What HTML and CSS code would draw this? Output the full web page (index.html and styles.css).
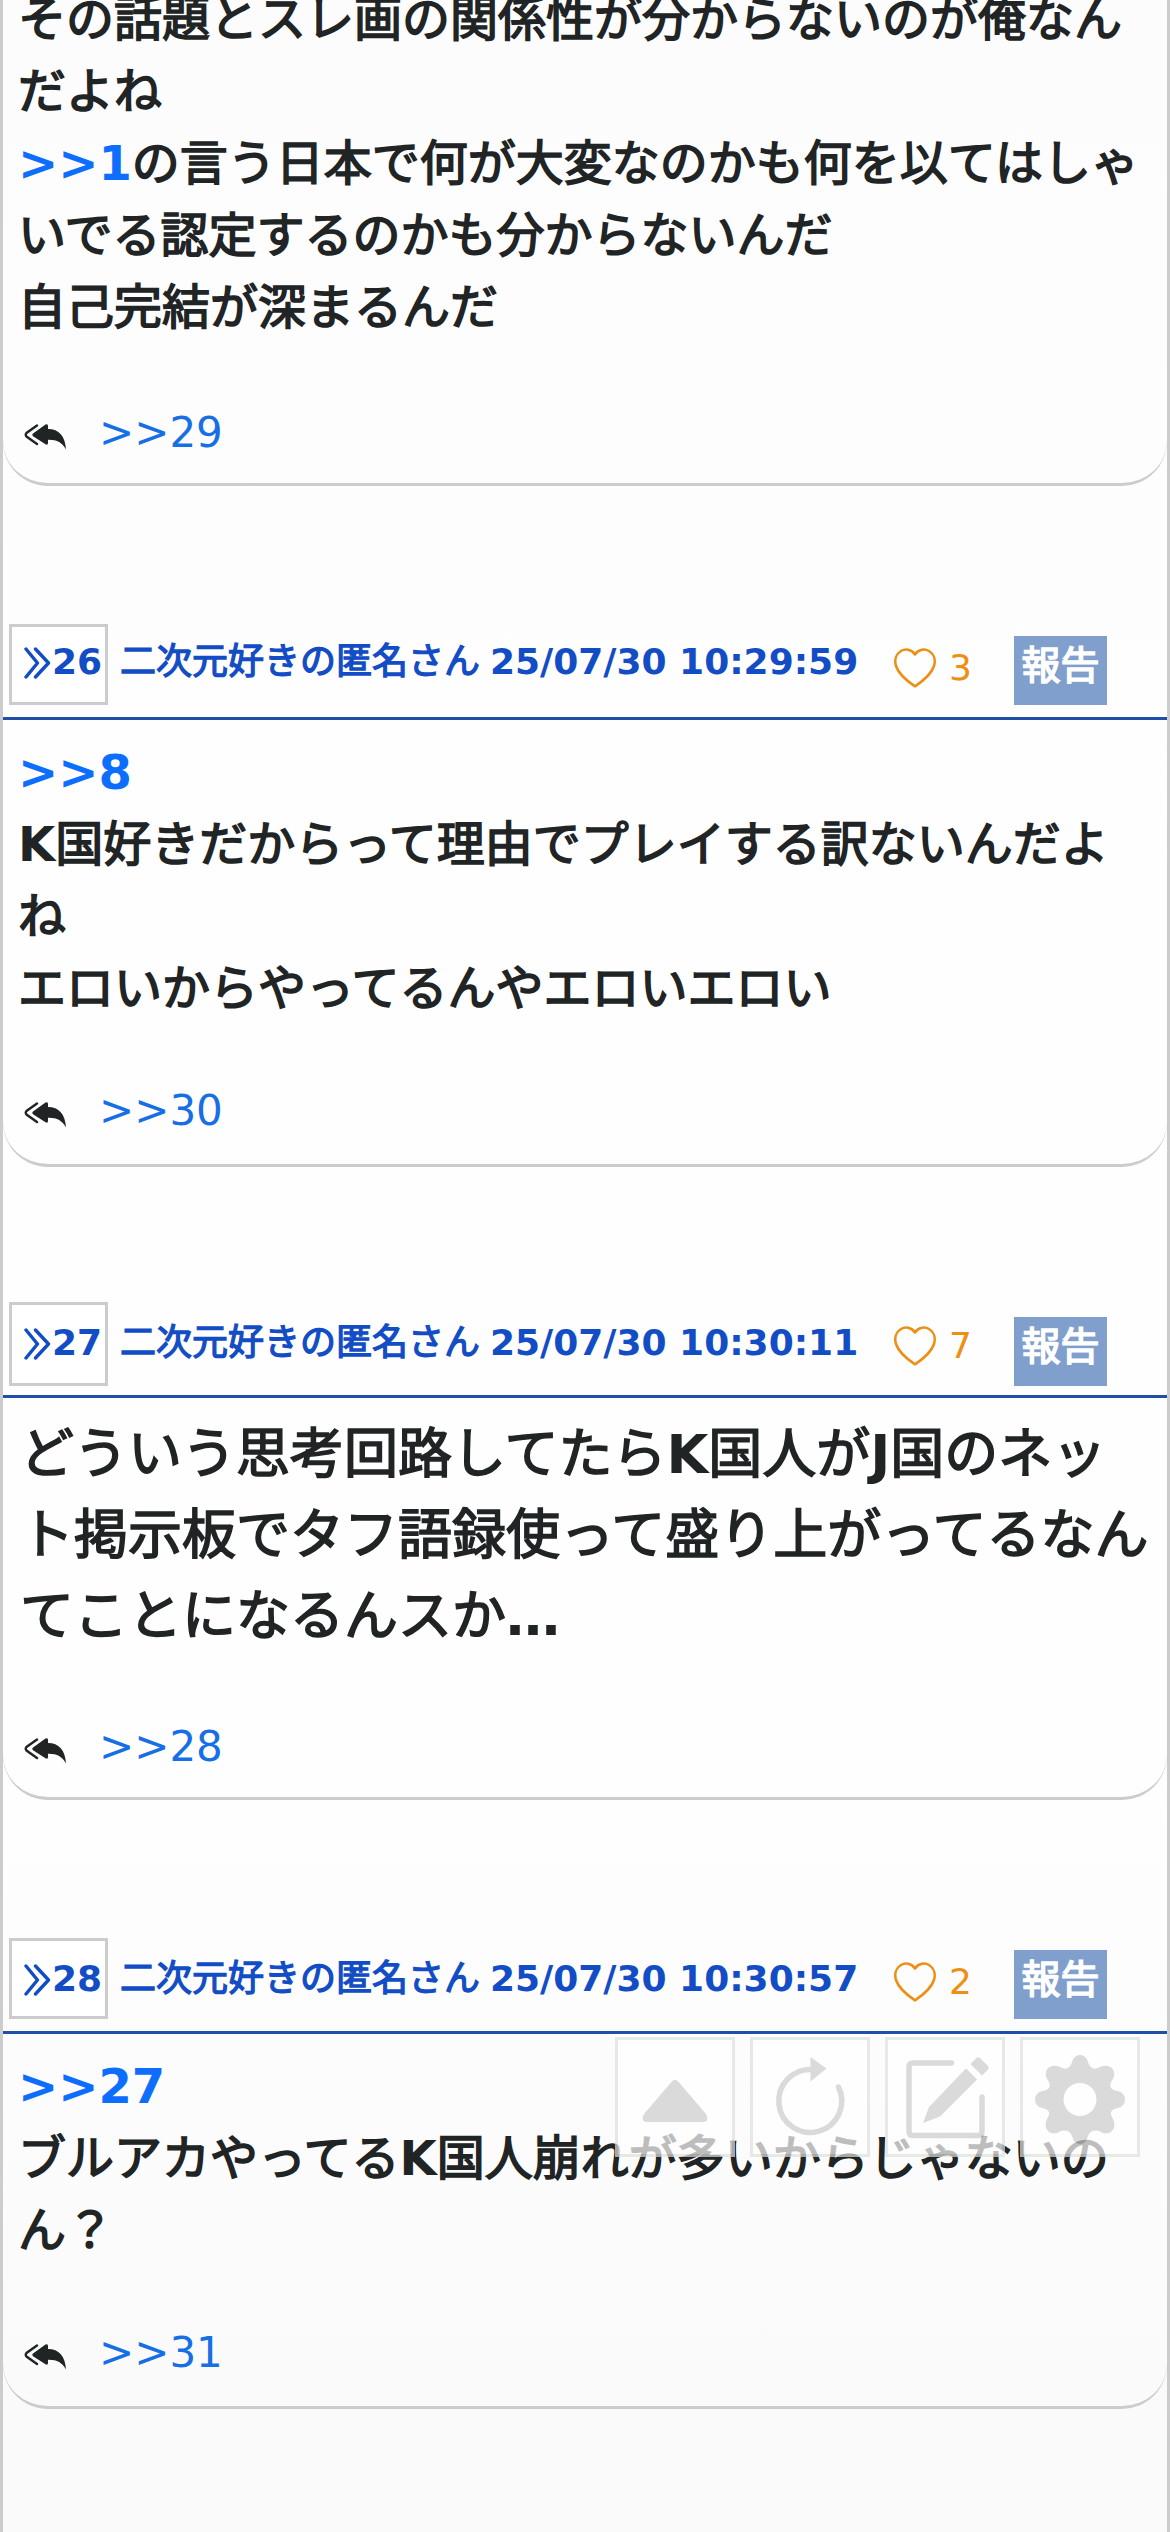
FILE: index.html
```html
<!DOCTYPE html>
<html lang="ja">
<head>
<meta charset="utf-8">
<title>スレッド</title>
<link rel="stylesheet" href="styles.css">
</head>
<body>
<svg class="defs" width="0" height="0">
  <symbol id="chev" viewBox="0 0 27 32"><path d="M2 2 L13.500 16 L2 30 M11.500 2 L24.500 16 L11.500 30" fill="none" stroke="currentColor" stroke-width="3.400" stroke-linecap="round" stroke-linejoin="round"/></symbol>
  <symbol id="heart" viewBox="0 0 42 40"><path d="M21 6.500 C17.500 1 11 .5 7 3 C2 6 .2 12 2 18 C5 27 13 33 21 38.300 C29 33 37 27 40 18 C41.800 12 40 6 35 3 C31 .5 24.500 1 21 6.500 Z" fill="none" stroke="currentColor" stroke-width="2.600" stroke-linejoin="round"/></symbol>
  <symbol id="reply" viewBox="0 0 42 26"><path d="M13 1.500 L2.500 9 Q1 10.800 2.500 12.600 L13 20" fill="none" stroke="currentColor" stroke-width="2.400" stroke-linecap="round"/><path d="M21.500 .6 Q24 -.8 24 2 V5 C35 5 41 12 42 25.500 C38 18.500 33 15.600 24 15.800 V19 Q24 21.700 21.500 20.300 L9 12.200 Q7.600 10.800 9 9.400 Z" fill="currentColor"/></symbol>
</svg>
<main class="thread">
  <article class="post first">
    <div class="text">その話題とスレ画の関係性が分からないのが俺なん<br>だよね<br><a>&gt;&gt;1</a>の言う日本で何が大変なのかも何を以てはしゃ<br>いでる認定するのかも分からないんだ<br>自己完結が深まるんだ</div>
    <div class="reply loose"><svg><use href="#reply"/></svg><a>&gt;&gt;29</a></div>
  </article>

  <article class="post p26">
    <header>
      <div class="num"><svg><use href="#chev"/></svg>26</div>
      <div class="name">二次元好きの匿名さん</div>
      <div class="date">25/07/30 10:29:59</div>
      <div class="like"><svg><use href="#heart"/></svg><span>3</span></div>
      <div class="report">報告</div>
    </header>
    <div class="text"><a>&gt;&gt;8</a><br><b>K</b>国好きだからって理由でプレイする訳ないんだよ<br>ね<br>エロいからやってるんやエロいエロい</div>
    <div class="reply"><svg><use href="#reply"/></svg><a>&gt;&gt;30</a></div>
  </article>

  <article class="post p27">
    <header>
      <div class="num"><svg><use href="#chev"/></svg>27</div>
      <div class="name">二次元好きの匿名さん</div>
      <div class="date">25/07/30 10:30:11</div>
      <div class="like"><svg><use href="#heart"/></svg><span>7</span></div>
      <div class="report">報告</div>
    </header>
    <div class="text big">どういう思考回路してたら<b>K</b>国人が<b>J</b>国のネッ<br>ト掲示板でタフ語録使って盛り上がってるなん<br>てことになるんスか<b>…</b></div>
    <div class="reply loose"><svg><use href="#reply"/></svg><a>&gt;&gt;28</a></div>
  </article>

  <article class="post p28">
    <header>
      <div class="num"><svg><use href="#chev"/></svg>28</div>
      <div class="name">二次元好きの匿名さん</div>
      <div class="date">25/07/30 10:30:57</div>
      <div class="like"><svg><use href="#heart"/></svg><span>2</span></div>
      <div class="report">報告</div>
    </header>
    <div class="text"><a>&gt;&gt;27</a><br>ブルアカやってる<b>K</b>国人崩れが多いからじゃないの<br>ん？</div>
    <div class="reply"><svg><use href="#reply"/></svg><a>&gt;&gt;31</a></div>
  </article>
</main>

<nav class="tools">
  <div class="tool"><svg viewBox="0 0 120 120"><path d="M56 45.500 Q60 40 64 45.500 L91 77 Q95 85 87 85 H33 Q25 85 29 77 Z"/></svg></div>
  <div class="tool"><svg viewBox="0 0 120 120"><path class="line" d="M62 32.500 A31.500 31.500 0 1 0 88.500 50" stroke-width="5.500"/><path d="M60.500 20 L76.500 31.500 L60.500 44.500 Z"/></svg></div>
  <div class="tool"><svg viewBox="0 0 120 120"><path class="line" d="M66.500 26 H28 Q24 26 24 30 V94.500 Q24 98.500 28 98.500 H93 Q97 98.500 97 94.500 V60" stroke-width="5.500"/><path d="M81 31.500 L92 42.500 L55 79.500 L38 86 L44 70 Z"/><path d="M91.500 21 Q93 19.500 95 21 L103 29 Q104.500 31 103 32.500 L97 38.500 L85.500 27 Z"/></svg></div>
  <div class="tool"><svg viewBox="0 0 120 120"><path d="M52 25 Q54 18 60 18 T68 25 Q71 35 80 30 Q87 27 92 31 Q97 37 91 45 Q88 53 98 54 Q105 56 105 62.500 T98 71 Q88 73 92 80 Q97 89 92 94 Q87 99 79 94 Q71 92 68 99 Q66 107 60 107 T52 99 Q49 92 41 94 Q33 99 28 94 Q23 89 28 80 Q32 73 22 71 Q15 69 15 62.500 T22 54 Q32 53 29 45 Q23 37 28 31 Q33 27 40 30 Q49 35 52 25 Z M60 46 A16.500 16.500 0 1 0 60 79 A16.500 16.500 0 1 0 60 46 Z" fill-rule="evenodd"/></svg></div>
</nav>
</body>
</html>
```
FILE: styles.css
```css
* { box-sizing: border-box; }

body {
  margin: 0;
  height: 2532px;
  overflow: hidden;
  font-family: "DejaVu Sans", "Noto Sans CJK JP", sans-serif;
  color: #212425;
}

.defs { position: absolute; }

.thread {
  height: 2532px;
  overflow: hidden;
  border: solid #ccc;
  border-width: 0 3px;
  background: linear-gradient(#fcfcfc, #fefefe 35%, #fefefe 70%, #fafafa 95%);
}

.post {
  display: flow-root;
  border-bottom: 3px solid #ccc;
  border-radius: 0 0 45px 45px;
  white-space: nowrap;
}

.first { height: 486px; }
.first .text { padding-top: 0; margin-top: -17px; }
.p26 { margin-top: 138px; height: 543px; --box: 81px; --shift: 11px; --report: 12px; }
.p27 { margin-top: 135px; height: 498px; --box: 84px; --shift: 14px; --report: 15px; }
.p28 { margin-top: 138px; height: 471px; --box: 81px; --shift: 14px; --report: 12px; }

header {
  display: flex;
  align-items: flex-start;
  height: 96px;
  padding-left: 6px;
  border-bottom: 3px solid #1f4fa8;
  font-size: 36px;
  line-height: 54px;
}

.num {
  display: flex;
  width: 99px;
  height: var(--box);
  padding: calc(var(--shift) - 3px) 0 0 12px;
  border: 3px solid #ccc;
  background: #fff;
  color: #124dc5;
  font-weight: bold;
}

.num svg { width: 27px; height: 32px; margin: 12px 1px 0 0; }

.name {
  width: 382px;
  margin-top: var(--shift);
  padding-left: 12px;
  color: #124dc5;
  -webkit-text-stroke: 1.3px;
}

.date {
  width: 397px;
  margin-top: var(--shift);
  color: #124dc5;
  font-weight: bold;
}

.like {
  display: flex;
  width: 121px;
  margin-top: 17px;
  color: #ed8f14;
}

.like svg { width: 42px; height: 40px; margin: 7px 13px 0 7px; }

.report {
  width: 93px;
  height: 69px;
  margin-top: var(--report);
  margin-left: 6px;
  background: #809fcd;
  color: #fff;
  font-size: 39px;
  -webkit-text-stroke: 1.5px;
  line-height: 60px;
  text-align: center;
}

.text {
  padding: 16px 15px 0;
  font-size: 48px;
  line-height: 72px;
  -webkit-text-stroke: 1.6px;
}

.text a, .text b { font-weight: bold; -webkit-text-stroke: 0; }

.big { padding-left: 17px; font-size: 54px; line-height: 81px; }

a { color: #0d6efd; }

.reply {
  display: flex;
  margin-top: 55px;
  padding-left: 21px;
  font-size: 42px;
  line-height: 63px;
}

.reply a { color: #176fe6; }
.loose { margin-top: 58px; }
.reply svg { width: 42px; height: 26px; margin: 23px 33px 0 0; }

.tools {
  position: absolute;
  left: 615px;
  top: 2037px;
  display: flex;
  gap: 15px;
  opacity: .7;
}

.tool {
  width: 120px;
  height: 120px;
  border: 3px solid #dde1dc;
  background: #fff;
  color: #ccc;
}

.tool svg { display: block; width: 120px; height: 120px; margin: -3px; fill: currentColor; }
.tool .line { fill: none; stroke: currentColor; stroke-linecap: round; }
```
